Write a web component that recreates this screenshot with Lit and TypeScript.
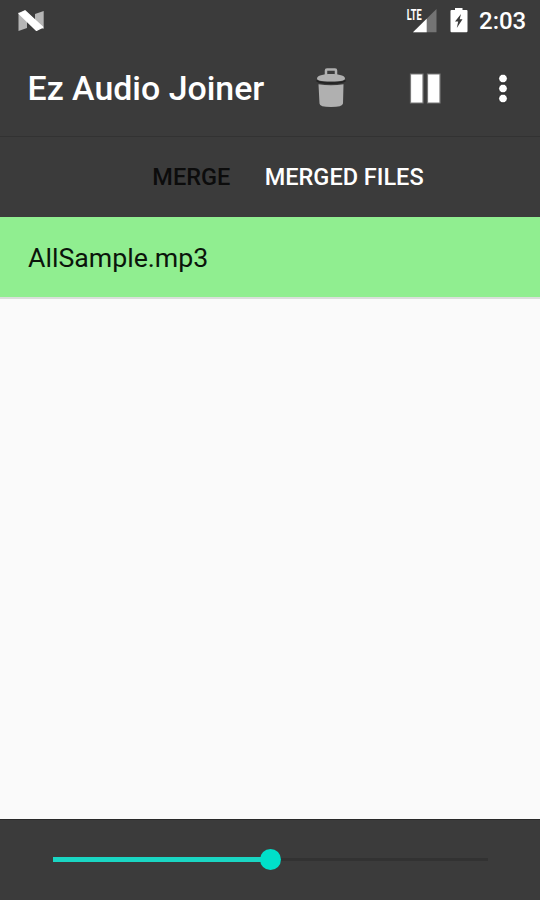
import { LitElement, html, css } from "lit";
import { customElement, property, state } from "lit/decorators.js";
import { classMap } from "lit/directives/class-map.js";

@customElement("status-bar")
class StatusBar extends LitElement {
  static styles = css`
    :host {
      display: flex;
      align-items: center;
      height: 42px;
      flex: none;
      padding: 0 14px 0 18px;
      box-sizing: border-box;
      color: #fff;
    }
    svg {
      display: block;
      flex: none;
    }
    .spacer {
      flex: 1;
    }
    .battery {
      margin-left: 13px;
    }
    .clock {
      width: 47px;
      margin-left: 11px;
      font-size: 24px;
      font-weight: 500;
      line-height: 44px;
      white-space: nowrap;
    }
    .lte {
      font: 700 14px "Roboto", sans-serif;
    }
  `;
  render() {
    return html`
      <svg width="26" height="22" viewBox="0 0 26 22">
        <path d="M0.5 2.500 9 5V18L0.500 21Z" fill="#b5b5b5" />
        <path d="M17 4 25.700 1V19L17 16Z" fill="#b5b5b5" />
        <path d="M1 3.500 7 0.700 24.800 17.300 18.500 20.500Z" fill="#fff" stroke="#fff" stroke-width="1.200" stroke-linejoin="round" />
      </svg>
      <div class="spacer"></div>
      <svg width="31" height="26" viewBox="0 0 31 26">
        <path d="M30.500 1V24.300H7Z" fill="#747474" />
        <path d="M20.700 10.700V24.300H7Z" fill="#fff" />
        <g transform="translate(0.8 11.500) scale(0.66 1)">
          <text class="lte" x="0" y="0" fill="#fff" stroke="#3b3b3b" stroke-width="2" paint-order="stroke">LTE</text>
        </g>
      </svg>
      <svg class="battery" width="18" height="26" viewBox="0 0 18 26">
        <path d="M5 -0.500H12.500V2H16.500Q17.500 2 17.500 3V23Q17.500 24.300 16.500 24.300H1.500Q0.500 24.300 0.500 23V3Q0.500 2 1.500 2H5Z" fill="#fff" />
        <path d="M11 6 5 13.500H8.200L6.800 20 12.500 11.300H9.700Z" fill="#3b3b3b" />
      </svg>
      <span class="clock">2:03</span>
    `;
  }
}

@customElement("action-bar")
class ActionBar extends LitElement {
  @property() heading = "";
  static styles = css`
    :host {
      display: flex;
      align-items: center;
      height: 94px;
      flex: none;
      padding: 0 30px 0 27.500px;
      box-sizing: border-box;
      color: #fff;
    }
    h1 {
      flex: 1;
      margin: 0;
      font-size: 33.900px;
      font-weight: 500;
      line-height: 96px;
      white-space: nowrap;
    }
    button {
      all: unset;
      display: block;
      flex: none;
    }
    svg {
      display: block;
    }
    .delete {
      margin-bottom: 2px;
    }
    .pause {
      margin-left: 62px;
    }
    .more {
      margin-left: 55px;
    }
  `;
  render() {
    return html`
      <h1>${this.heading}</h1>
      <button class="delete" aria-label="Delete">
        <svg width="32" height="42" viewBox="0 0 32 42">
          <path d="M11 9V3.500Q11 2.500 12 2.500H20Q21 2.500 21 3.500V9" fill="none" stroke="#b0b0b0" stroke-width="2.500" />
          <path d="M2 11.500C2 8.500 8 7 16 7S30 8.500 30 11.500C30 13.500 27 14.500 16 14.500S2 13.500 2 11.500Z" fill="#b0b0b0" />
          <path d="M1.500 13.500Q4 16.200 16 16.200T30.500 13.500" fill="none" stroke="#222" stroke-width="1.800" />
          <path d="M3.500 17.200Q16 19.500 28.500 17.200L28 36.500Q27.500 40 16 40T4.500 36.500Z" fill="#b0b0b0" />
        </svg>
      </button>
      <button class="pause" aria-label="Pause">
        <svg width="32" height="32" viewBox="0 0 32 32">
          <path d="M1.500 1H14V30H1.500ZM18.500 1H31V30H18.500Z" fill="#fff" stroke="#777" stroke-width="1.200" />
        </svg>
      </button>
      <button class="more" aria-label="More options">
        <svg width="14" height="30" viewBox="0 0 14 30">
          <g fill="#fff" stroke="#242424" stroke-width="1">
            <circle cx="7" cy="4.500" r="4.400" />
            <circle cx="7" cy="14.500" r="4.400" />
            <circle cx="7" cy="24.500" r="4.400" />
          </g>
        </svg>
      </button>
    `;
  }
}

@customElement("seek-bar")
class SeekBar extends LitElement {
  @property({ type: Number }) value = 0;
  static styles = css`
    :host {
      display: flex;
      align-items: center;
      height: 81px;
      flex: none;
      padding: 0 52px 2px 53px;
      box-sizing: border-box;
      background: #3b3b3b;
      border-top: 1px solid #292929;
    }
    .track {
      position: relative;
      flex: 1;
      height: 3px;
      background: #323232;
    }
    .fill {
      position: absolute;
      left: 0;
      top: -1px;
      height: 5px;
      background: #1ad6c3;
    }
    .thumb {
      position: absolute;
      right: -10.500px;
      top: -8px;
      width: 21px;
      height: 21px;
      border-radius: 50%;
      background: #00dfca;
    }
  `;
  render() {
    return html`<div class="track">
      <div class="fill" style="width:${this.value}%"><div class="thumb"></div></div>
    </div>`;
  }
}

@customElement("app-root")
class AppRoot extends LitElement {
  @state() tab = 1;
  private tabs = ["MERGE", "MERGED FILES"];
  private files = ["AllSample.mp3"];
  static styles = css`
    :host {
      display: flex;
      flex-direction: column;
      width: 540px;
      height: 900px;
      overflow: hidden;
      background: #3b3b3b;
      font-family: "Roboto", sans-serif;
    }
    nav {
      display: flex;
      justify-content: center;
      gap: 34.500px;
      height: 81px;
      flex: none;
      box-sizing: border-box;
      padding-left: 36px;
      border-top: 1px solid #323232;
    }
    .tab {
      font-size: 23.500px;
      font-weight: 500;
      line-height: 81px;
      color: #0c0c0c;
      white-space: nowrap;
    }
    .active {
      color: #fff;
    }
    main {
      flex: 1;
      background: #fafafa;
    }
    .file {
      height: 80px;
      padding-left: 28px;
      font-size: 26.700px;
      line-height: 82px;
      color: #0b150b;
      background: #90ee90;
      border-bottom: 2px solid #dadfda;
    }
  `;
  render() {
    return html`
      <status-bar></status-bar>
      <action-bar heading="Ez Audio Joiner"></action-bar>
      <nav>
        ${this.tabs.map(
          (t, i) => html`<span class=${classMap({ tab: true, active: i === this.tab })} @click=${() => (this.tab = i)}>${t}</span>`
        )}
      </nav>
      <main>${this.files.map((f) => html`<div class="file">${f}</div>`)}</main>
      <seek-bar value="50"></seek-bar>
    `;
  }
}
